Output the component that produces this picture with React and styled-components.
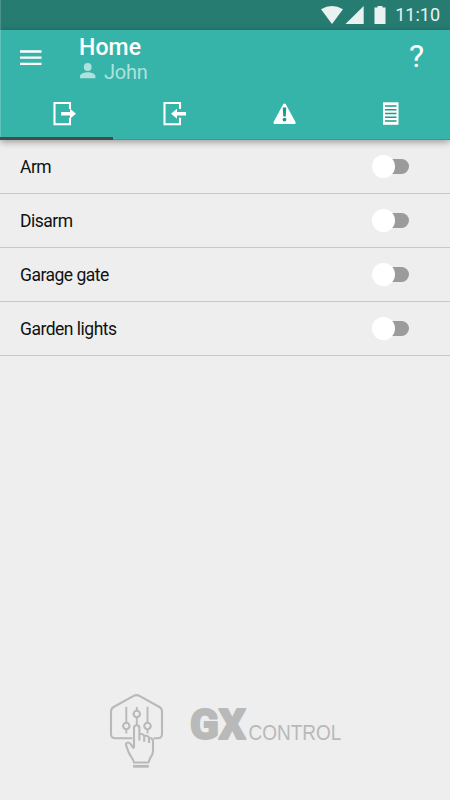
import React, { useState } from "react";
import styled, { createGlobalStyle } from "styled-components";

const GlobalStyle = createGlobalStyle`
  * {
    box-sizing: border-box;
  }

  body {
    margin: 0;
    background: #eeeeee;
    font-family: Roboto, "Liberation Sans", sans-serif;
  }
`;

const Screen = styled.div`
  width: 450px;
  height: 800px;
  display: flex;
  flex-direction: column;
  background: #eeeeee;
  overflow: hidden;
`;

const StatusBar = styled.div`
  height: 30px;
  flex-shrink: 0;
  display: flex;
  align-items: center;
  justify-content: flex-end;
  padding-right: 10px;
  background: #277c72;
  box-shadow: inset 1px 0 #4a938b;
  color: #e9f2f1;
`;

const Clock = styled.span`
  margin-left: 8px;
  font-size: 18px;
  line-height: 30px;
`;

const Header = styled.header`
  position: relative;
  height: 110px;
  flex-shrink: 0;
  background: #37b4a9;
  border-bottom: 1px solid #1ba79b;
  box-shadow: 0 2px 7px rgba(0, 0, 0, 0.36), inset 1px 0 #5fc3ba;
  color: #ffffff;
`;

const TopRow = styled.div`
  height: 57px;
  display: flex;
  align-items: flex-start;
  padding: 0 26px 0 20px;
`;

const MenuButton = styled.button`
  width: 22px;
  height: 16px;
  margin: 20px 37px 0 0;
  padding: 0;
  border: 0;
  background: none;
  color: inherit;

  svg {
    display: block;
  }
`;

const Titles = styled.div`
  flex: 1;
  padding-top: 5px;
`;

const Title = styled.h1`
  margin: 0;
  font-size: 23px;
  font-weight: 500;
  line-height: 25px;
  letter-spacing: 0.1px;
`;

const User = styled.div`
  display: flex;
  align-items: center;
  gap: 8px;
  font-size: 20px;
  line-height: 24px;
  letter-spacing: -0.2px;
  color: #afe1dd;

  svg {
    margin-top: -2px;
  }
`;

const Help = styled.span`
  padding-top: 7px;
  font-size: 32px;
  line-height: 38px;
`;

const Tabs = styled.nav`
  display: grid;
  grid-template-columns: repeat(4, 110px);
  padding-top: 14px;
`;

const Tab = styled.button`
  height: 28px;
  padding: 0 0 0 53px;
  border: 0;
  background: none;
  color: #ffffff;
  text-align: left;

  svg {
    display: block;
  }
`;

const Indicator = styled.div`
  position: absolute;
  left: 0;
  bottom: -1px;
  width: 113px;
  height: 3px;
  background: #444c4a;
`;

const Row = styled.label`
  height: 53.9px;
  display: flex;
  align-items: center;
  justify-content: space-between;
  padding: 0 41px 0 20px;
  border-bottom: 1px solid #c8c8c8;
  font-size: 17.5px;
  line-height: 20px;
  letter-spacing: -0.5px;
  color: #111111;
`;

const RowLabel = styled.span`
  padding-top: 2px;
`;

const Switch = styled.span`
  width: 37px;
  height: 23px;
  display: flex;
  align-items: center;
`;

const Knob = styled.span`
  width: 23px;
  height: 23px;
  flex-shrink: 0;
  border-radius: 50%;
  background: #ffffff;
  z-index: 1;
`;

const Track = styled.span`
  width: 24px;
  height: 15px;
  flex-shrink: 0;
  margin-left: -10px;
  border-radius: 8px;
  background: #9b9b9a;
`;

const Brand = styled.footer`
  margin-top: auto;
  padding: 0 0 32px 108px;
  display: flex;
  align-items: flex-start;
  color: #b9b9b9;
`;

const Wordmark = styled.svg`
  display: block;
  margin-left: 24px;
  overflow: visible;
  fill: currentColor;
`;

const DoorIcon = ({ inward }) => (
  <svg width="24" height="28" viewBox="0 0 24 28" fill="none">
    <path d="M17 8V2H1.5v21.3H17v-6.5" stroke="currentColor" strokeWidth="2.1" />
    {inward ? (
      <path d="M8 12.7l6-5v3.4h9v3.3h-9v3.4z" fill="currentColor" />
    ) : (
      <path d="M23 12.7l-6-5v3.4H8v3.3h9v3.4z" fill="currentColor" />
    )}
  </svg>
);

const AlertIcon = () => (
  <svg width="24" height="28" viewBox="0 0 24 28">
    <path
      d="M11.5 4L21.2 21.6H1.9z"
      fill="currentColor"
      stroke="currentColor"
      strokeWidth="3"
      strokeLinejoin="round"
    />
    <path d="M9.7 6.5h3.6l-.6 9h-2.4z" fill="#189b8e" />
    <circle cx="11.5" cy="18.6" r="1.9" fill="#189b8e" />
  </svg>
);

const LogIcon = () => (
  <svg width="17" height="28" viewBox="0 0 17 28">
    <path d="M0 1.3h15.5v22.5H0z" fill="currentColor" />
    <path d="M2 5h11.5M2 8.8h11.5M2 12.5h11.5M2 16.2h11.5M2 20h11.5" stroke="#189b8e" strokeWidth="1.5" />
  </svg>
);

const TouchPanel = () => (
  <svg width="58" height="76" viewBox="0 0 58 76" fill="none" stroke="currentColor" strokeWidth="2.1">
    <path d="M24.5 46.3H7.5Q3 46.3 3 42V19.5Q3 16.5 5.6 15L25.6 3.9Q28.5 2.4 31.4 3.9L51.4 15Q54 16.5 54 19.5V42Q54 46.3 49.5 46.3H45.5" />
    <path d="M18.3 14.7v16M18.3 37v4.5M28.8 15v3.8M28.8 25v9M39.5 14.7v16M39.5 37v4.5" strokeWidth="1.9" />
    <circle cx="18.3" cy="34" r="3.2" />
    <circle cx="28.8" cy="22" r="3.2" />
    <circle cx="39.5" cy="34" r="3.2" />
    <path d="M26 56V36a2.7 2.7 0 0 1 5.4 0v12.5M31.4 42.3c2.8-.8 4.8.2 4.8 2.5v5M36.2 44c2.8-.8 4.8.2 4.8 2.5v4.5M41 46c2.2-.2 4 .8 4 3.2V59c0 3.5-1.3 5.5-3 7.5l-1.5 4H26c-.3-3.2-3.5-5.8-5-9.5-1-2.5-1.7-4.8-2.7-7-1.3-3.7 2.3-4.6 4.2-2l3.5 4.5" />
    <path d="M25 74.3h15.8" strokeWidth="2.8" />
  </svg>
);

const rows = ["Arm", "Disarm", "Garage gate", "Garden lights"];

function App() {
  const [active, setActive] = useState(0);

  return (
    <>
      <GlobalStyle />
      <Screen>
        <StatusBar>
          <svg width="66" height="20" viewBox="0 0 66 20" fill="currentColor">
            <path d="M0 4.3Q11-2.5 22 4.3L11 19z" />
            <path d="M42.7 1v18H24.5z" />
            <path d="M53.5 2.5h3V1h5v1.5h3V19h-11z" />
          </svg>
          <Clock>11:10</Clock>
        </StatusBar>

        <Header>
          <TopRow>
            <MenuButton aria-label="Menu">
              <svg width="22" height="16" viewBox="0 0 22 16">
                <path d="M0 1.5h21.5M0 7.7h21.5M0 13.8h21.5" stroke="currentColor" strokeWidth="2.3" />
              </svg>
            </MenuButton>
            <Titles>
              <Title>Home</Title>
              <User>
                <svg width="17" height="16" viewBox="0 0 17 16" fill="currentColor">
                  <circle cx="8.7" cy="4" r="3.9" />
                  <path d="M1 15.3v-2C1 10.7 6 9.3 8.7 9.3s7.7 1.4 7.7 4v2z" />
                </svg>
                John
              </User>
            </Titles>
            <Help>?</Help>
          </TopRow>
          <Tabs>
            <Tab aria-label="Outputs" onClick={() => setActive(0)}><DoorIcon /></Tab>
            <Tab aria-label="Inputs" onClick={() => setActive(1)}><DoorIcon inward /></Tab>
            <Tab aria-label="Alerts" onClick={() => setActive(2)}><AlertIcon /></Tab>
            <Tab aria-label="Events" onClick={() => setActive(3)}><LogIcon /></Tab>
          </Tabs>
          <Indicator style={{ transform: `translateX(${active * 112.5}px)` }} />
        </Header>

        <main>
          {rows.map((name) => (
            <Row key={name}>
              <RowLabel>{name}</RowLabel>
              <Switch>
                <Knob />
                <Track />
              </Switch>
            </Row>
          ))}
        </main>

        <Brand>
          <TouchPanel />
          <Wordmark width="160" height="60" viewBox="0 0 160 60">
            <text
              transform="translate(0 47) scale(0.98 1)"
              fontFamily="Roboto"
              fontWeight="900"
              fontSize="43"
              stroke="currentColor"
              strokeWidth="1.8"
              strokeLinejoin="round"
            >
              GX
            </text>
            <text
              transform="translate(58.5 48) scale(0.864 1)"
              fontFamily="Liberation Sans"
              fontSize="22"
            >
              CONTROL
            </text>
          </Wordmark>
        </Brand>
      </Screen>
    </>
  );
}

export default App;
